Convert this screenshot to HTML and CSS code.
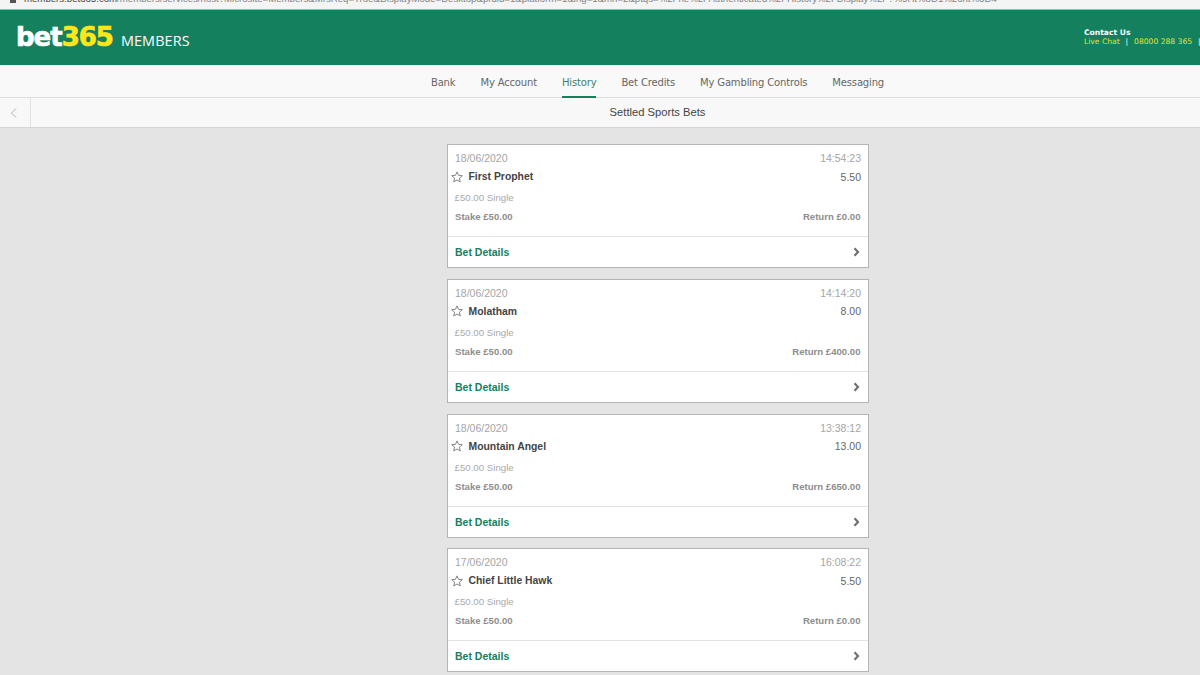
FILE: index.html
```html
<!DOCTYPE html>
<html lang="en">
<head>
<meta charset="utf-8">
<title>Settled Sports Bets</title>
<link rel="stylesheet" href="styles.css">
</head>
<body>
<div class="urlbar">
  <span class="lock"></span>
  <span class="url"><span class="domain">members.bet365.com</span>/members/services/host?Microsite=Members&amp;MrsReq=True&amp;DisplayMode=Desktop&amp;prdid=1&amp;platform=1&amp;lng=1&amp;mh=2&amp;ptqs=%2Fhe%2FAuthenticated%2FHistory%2FDisplay%2F?%5Ht%3D1%26nt%3D4</span>
</div>
<header class="masthead">
  <div class="logo"><span class="logo-bet">bet</span><span class="logo-365">365</span><span class="logo-members">MEMBERS</span></div>
  <div class="contact">
    <div class="contact-title">Contact Us</div>
    <div class="contact-links">Live Chat <span class="sep">|</span> 08000 288 365 <span class="sep">|</span></div>
  </div>
</header>
<nav class="nav">
  <a class="nav-item">Bank</a>
  <a class="nav-item">My Account</a>
  <a class="nav-item active">History</a>
  <a class="nav-item">Bet Credits</a>
  <a class="nav-item">My Gambling Controls</a>
  <a class="nav-item">Messaging</a>
</nav>
<div class="subbar">
  <div class="back"><svg width="8" height="12" viewBox="0 0 8 12"><path d="M6 1.5 1.5 6 6 10.5" fill="none" stroke="#b0b0b0" stroke-width="1"/></svg></div>
  <div class="subtitle">Settled Sports Bets</div>
</div>
<main class="list">
  <article class="card">
    <div class="row meta"><span>18/06/2020</span><span>14:54:23</span></div>
    <div class="row pick"><span class="name"><svg class="star" width="12" height="12" viewBox="0 0 12 12"><path d="M6 .9 7.5 4.3l3.8.4-2.9 2.5.9 3.7L6 9l-3.3 1.9.9-3.7L.7 4.7l3.8-.4z" fill="none" stroke="#777" stroke-width=".9"/></svg>First Prophet</span><span class="odds">5.50</span></div>
    <div class="type">£50.00 Single</div>
    <div class="row money"><span>Stake £50.00</span><span>Return £0.00</span></div>
    <div class="details"><span>Bet Details</span><svg width="7" height="10" viewBox="0 0 7 10"><path d="M1.5 1.3 5 5 1.5 8.7" fill="none" stroke="#707070" stroke-width="2.2"/></svg></div>
  </article>
  <article class="card">
    <div class="row meta"><span>18/06/2020</span><span>14:14:20</span></div>
    <div class="row pick"><span class="name"><svg class="star" width="12" height="12" viewBox="0 0 12 12"><path d="M6 .9 7.5 4.3l3.8.4-2.9 2.5.9 3.7L6 9l-3.3 1.9.9-3.7L.7 4.7l3.8-.4z" fill="none" stroke="#777" stroke-width=".9"/></svg>Molatham</span><span class="odds">8.00</span></div>
    <div class="type">£50.00 Single</div>
    <div class="row money"><span>Stake £50.00</span><span>Return £400.00</span></div>
    <div class="details"><span>Bet Details</span><svg width="7" height="10" viewBox="0 0 7 10"><path d="M1.5 1.3 5 5 1.5 8.7" fill="none" stroke="#707070" stroke-width="2.2"/></svg></div>
  </article>
  <article class="card">
    <div class="row meta"><span>18/06/2020</span><span>13:38:12</span></div>
    <div class="row pick"><span class="name"><svg class="star" width="12" height="12" viewBox="0 0 12 12"><path d="M6 .9 7.5 4.3l3.8.4-2.9 2.5.9 3.7L6 9l-3.3 1.9.9-3.7L.7 4.7l3.8-.4z" fill="none" stroke="#777" stroke-width=".9"/></svg>Mountain Angel</span><span class="odds">13.00</span></div>
    <div class="type">£50.00 Single</div>
    <div class="row money"><span>Stake £50.00</span><span>Return £650.00</span></div>
    <div class="details"><span>Bet Details</span><svg width="7" height="10" viewBox="0 0 7 10"><path d="M1.5 1.3 5 5 1.5 8.7" fill="none" stroke="#707070" stroke-width="2.2"/></svg></div>
  </article>
  <article class="card">
    <div class="row meta"><span>17/06/2020</span><span>16:08:22</span></div>
    <div class="row pick"><span class="name"><svg class="star" width="12" height="12" viewBox="0 0 12 12"><path d="M6 .9 7.5 4.3l3.8.4-2.9 2.5.9 3.7L6 9l-3.3 1.9.9-3.7L.7 4.7l3.8-.4z" fill="none" stroke="#777" stroke-width=".9"/></svg>Chief Little Hawk</span><span class="odds">5.50</span></div>
    <div class="type">£50.00 Single</div>
    <div class="row money"><span>Stake £50.00</span><span>Return £0.00</span></div>
    <div class="details"><span>Bet Details</span><svg width="7" height="10" viewBox="0 0 7 10"><path d="M1.5 1.3 5 5 1.5 8.7" fill="none" stroke="#707070" stroke-width="2.2"/></svg></div>
  </article>
</main>
</body>
</html>
```
FILE: styles.css
```css
* { box-sizing: border-box; }
html, body { height: 100%; }
body {
  margin: 0;
  height: 675px;
  overflow: hidden;
  background: #e4e4e4;
  font-family: "Liberation Sans", Arial, sans-serif;
  color: #444;
}
.urlbar {
  height: 10px;
  background: #f4f4f4;
  border-bottom: 1px solid #a9aeac;
  overflow: hidden;
  display: flex;
  align-items: flex-end;
  padding-left: 10px;
  gap: 8px;
  white-space: nowrap;
  font-size: 9.65px;
  line-height: 14px;
  color: #858585;
}
.lock { width: 6px; height: 3px; margin-bottom: 6px; background: #555; flex: none; }
.url { margin-bottom: 3px; }
.domain { color: #444; }
.masthead {
  height: 55px;
  background: #14805e;
  display: flex;
  justify-content: space-between;
  position: relative;
}
.logo {
  display: flex;
  align-items: baseline;
  padding: 9px 0 0 16px;
  height: 40px;
}
.logo-bet, .logo-365 {
  font-family: "DejaVu Sans", sans-serif;
  font-weight: 700;
  font-size: 26px;
  line-height: 36px;
  letter-spacing: -1px;
  -webkit-text-stroke: .7px currentColor;
}
.logo-bet { color: #fff; }
.logo-365 { color: #ffe51c; }
.logo-members {
  font-family: "Open Sans", sans-serif;
  font-size: 14.4px;
  color: #fff;
  margin-left: 8px;
  letter-spacing: .1px;
}
.contact {
  width: 116px;
  padding-top: 18px;
  font-family: "DejaVu Sans", sans-serif;
  font-size: 7.6px;
  line-height: 9px;
  white-space: nowrap;
}
.contact-title { color: #fff; font-weight: 700; }
.contact-links { color: #e7e02a; }
.sep { color: #fff; margin: 0 3.5px; }
.nav {
  height: 33px;
  background: #f9f9f9;
  border-bottom: 1px solid #dcdcdc;
  display: flex;
  justify-content: center;
  gap: 25px;
  padding-left: 115px;
}
.nav-item {
  font-family: "DejaVu Sans", sans-serif;
  font-size: 10px;
  letter-spacing: -.16px;
  line-height: 35px;
  color: #666;
  height: 33px;
}
.nav-item.active { color: #3f7f6c; border-bottom: 2px solid #14805e; }
.subbar {
  height: 30px;
  background: #f8f8f8;
  border-bottom: 1px solid #d5d5d5;
  display: flex;
}
.back {
  width: 31px;
  border-right: 1px solid #e2e2e2;
  display: flex;
  align-items: center;
  justify-content: center;
  padding-right: 3px;
}
.subtitle {
  flex: 1;
  text-align: center;
  font-size: 11.2px;
  line-height: 29px;
  color: #444;
  padding-left: 84px;
}
.list {
  width: 422px;
  margin: 16px 0 0 447px;
  display: flex;
  flex-direction: column;
  gap: 10.75px;
}
.card {
  height: 124px;
  flex: none;
  background: #fff;
  border: 1px solid #b5b5b5;
  display: flex;
  flex-direction: column;
}
.row {
  display: flex;
  justify-content: space-between;
  padding: 0 7px;
}
.meta {
  font-size: 10.5px;
  line-height: 12px;
  color: #a5a5a5;
  padding-top: 7px;
  height: 20px;
}
.pick { height: 20px; align-items: center; font-size: 10.4px; margin-top: 1.5px; }
.name {
  font-weight: 700;
  color: #444;
  display: flex;
  align-items: center;
  margin-left: -4px;
}
.star { margin-right: 6px; margin-left: -.5px; }
.odds { font-size: 10.5px; color: #666; }
.type { font-size: 9.7px; color: #aaa; padding-left: 6.5px; margin-top: 4.5px; line-height: 14px; height: 14px; }
.money { font-weight: 700; font-size: 9.6px; color: #8e8e8e; margin-top: 6px; line-height: 12px; height: 12px; padding-right: 7.5px; }
.details {
  margin-top: auto;
  height: 31px;
  border-top: 1px solid #e2e2e2;
  display: flex;
  justify-content: space-between;
  align-items: center;
  padding: 0 8px 0 7px;
  font-size: 10.5px;
  font-weight: 700;
  color: #14805e;
}
```
